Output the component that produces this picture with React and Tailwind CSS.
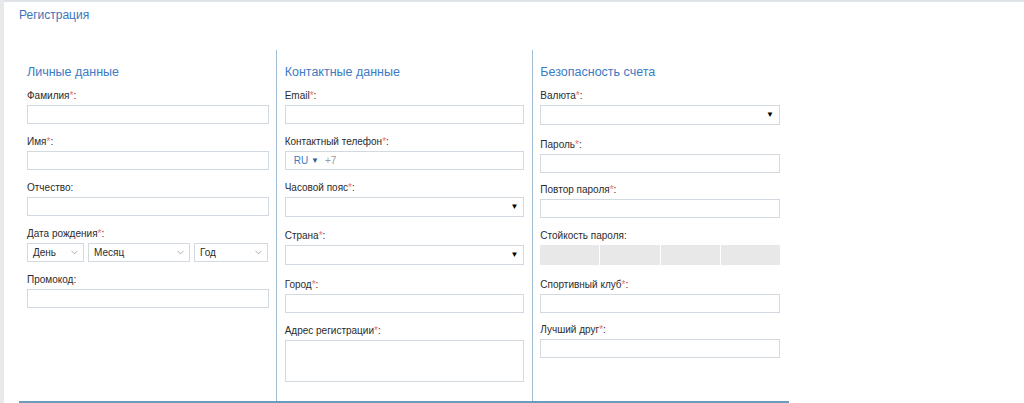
import React from 'react';
import { ChevronDown } from 'lucide-react';

const Label = ({ text, req }) => (
  <div className="text-[10px] leading-[12px] text-[#2b2b2b] mb-[3px] whitespace-nowrap">
    {text}
    {req && <span className="text-[#e57373]">*</span>}:
  </div>
);

const Input = ({ h = 'h-[19px]' }) => (
  <div className={`${h} w-full border border-[#d3d9e0] bg-white`} />
);

const Select = () => (
  <div className="h-[20px] w-full border border-[#d3d9e0] bg-white flex items-center justify-end pr-[5px]">
    <span className="text-[8px] text-black leading-none">▼</span>
  </div>
);

const NativeSelect = ({ text, w }) => (
  <div className={`${w} h-[19px] border border-[#d3d9e0] bg-white flex items-center justify-between pl-[5px] pr-[3px]`}>
    <span className="text-[10px] text-[#2b2b2b]">{text}</span>
    <ChevronDown size={11} strokeWidth={1.5} className="text-[#888]" />
  </div>
);

const Field = ({ text, req, children, gap = 'mb-[12px]' }) => (
  <div className={gap}>
    <Label text={text} req={req} />
    {children}
  </div>
);

const Header = ({ children }) => (
  <h3 className="text-[12.5px] leading-[18px] text-[#3b7bc4] mb-[9px]">{children}</h3>
);

export default function App() {
  return (
    <div className="min-h-screen bg-white flex" style={{ fontFamily: '"Liberation Sans", Arial, sans-serif' }}>
      <div className="w-[4px] bg-[#e8e9eb] shrink-0" />
      <div className="flex-1 border-t-2 border-[#dfe3e8]">
        <div className="h-[48px] pl-[15px] pt-[6px] text-[12px] leading-[15px] text-[#3d74b8]">Регистрация</div>
        <div className="ml-[15px] w-[770px] grid grid-cols-3 border-b-2 border-[#6b9cbd] h-[353px]">
          <div className="pl-[8px] pr-[7px] pt-[13px]">
            <Header>Личные данные</Header>
            <Field text="Фамилия" req><Input /></Field>
            <Field text="Имя" req><Input /></Field>
            <Field text="Отчество"><Input /></Field>
            <Field text="Дата рождения" req>
              <div className="flex gap-[4px]">
                <NativeSelect text="День" w="w-[57px]" />
                <NativeSelect text="Месяц" w="w-[102px]" />
                <NativeSelect text="Год" w="w-[74px]" />
              </div>
            </Field>
            <Field text="Промокод"><Input /></Field>
          </div>
          <div className="border-l border-[#9fbcd2] pl-[8px] pr-[8px] pt-[13px]">
            <Header>Контактные данные</Header>
            <Field text="Email" req><Input /></Field>
            <Field text="Контактный телефон" req>
              <div className="h-[19px] w-full border border-[#d3d9e0] bg-white flex items-center pl-[8px] text-[10px]">
                <span className="text-[#3b7bc4]">RU</span>
                <span className="text-[#2d5f9a] text-[8px] ml-[3px]">▼</span>
                <span className="text-[#999] ml-[6px]">+7</span>
              </div>
            </Field>
            <Field text="Часовой пояс" req gap="mb-[13px]"><Select /></Field>
            <Field text="Страна" req gap="mb-[14px]"><Select /></Field>
            <Field text="Город" req><Input /></Field>
            <Field text="Адрес регистрации" req><Input h="h-[42px]" /></Field>
          </div>
          <div className="border-l border-[#9fbcd2] pl-[7px] pr-[9px] pt-[13px]">
            <Header>Безопасность счета</Header>
            <Field text="Валюта" req gap="mb-[14px]"><Select /></Field>
            <Field text="Пароль" req gap="mb-[11px]"><Input /></Field>
            <Field text="Повтор пароля" req><Input /></Field>
            <div className="mb-[14px]">
              <div className="text-[10px] leading-[12px] text-[#2b2b2b] mb-[3px]">Стойкость пароля:</div>
              <div className="h-[20px] grid grid-cols-4 gap-[1px]">
                <div className="bg-[#e8e8e8]" />
                <div className="bg-[#e8e8e8]" />
                <div className="bg-[#e8e8e8]" />
                <div className="bg-[#e8e8e8]" />
              </div>
            </div>
            <Field text="Спортивный клуб" req gap="mb-[11px]"><Input /></Field>
            <Field text="Лучший друг" req><Input /></Field>
          </div>
        </div>
      </div>
    </div>
  );
}
